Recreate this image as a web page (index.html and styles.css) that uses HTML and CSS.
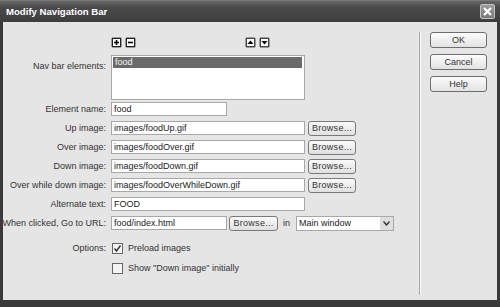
FILE: index.html
```html
<!DOCTYPE html>
<html>

<head>
  <title>Modify Navigation Bar</title>
  <link rel="stylesheet" href="styles.css">
</head>

<body>
  <div class="window">
    <div class="titlebar">
      <label>Modify Navigation Bar</label>
      <div class="close">
        <svg width="11" height="11" viewBox="0 0 11 11"><path d="M2 2 L9 9 M9 2 L2 9" stroke="#fff" stroke-width="2.2" /></svg>
      </div>
    </div>
    <div class="isi">
      <div class="form">
        <div class="tools">
          <span class="mini"><svg width="9" height="9" viewBox="0 0 9 9"><rect x="0.5" y="0.5" width="8" height="8" fill="#fff" stroke="#222" /><path d="M4.5 2 V7 M2 4.5 H7" stroke="#000" stroke-width="1.6" /></svg></span>
          <span class="mini"><svg width="9" height="9" viewBox="0 0 9 9"><rect x="0.5" y="0.5" width="8" height="8" fill="#fff" stroke="#222" /><path d="M2 4.5 H7" stroke="#000" stroke-width="1.6" /></svg></span>
          <span class="mini geser"><svg width="9" height="9" viewBox="0 0 9 9"><rect x="0.5" y="0.5" width="8" height="8" fill="#fff" stroke="#444" /><path d="M1.5 6 L4.5 2.5 L7.5 6 Z" fill="#000" /></svg></span>
          <span class="mini"><svg width="9" height="9" viewBox="0 0 9 9"><rect x="0.5" y="0.5" width="8" height="8" fill="#fff" stroke="#444" /><path d="M1.5 3 L4.5 6.5 L7.5 3 Z" fill="#000" /></svg></span>
        </div>
        <div class="row listrow">
          <span class="label">Nav bar elements:</span>
          <div class="list">
            <div class="pilih">food</div>
          </div>
        </div>
        <div class="row">
          <span class="label">Element name:</span>
          <input class="teks pendek" type="text" value="food" />
        </div>
        <div class="row">
          <span class="label">Up image:</span>
          <input class="teks" type="text" value="images/foodUp.gif" />
          <button class="browse">Browse...</button>
        </div>
        <div class="row">
          <span class="label">Over image:</span>
          <input class="teks" type="text" value="images/foodOver.gif" />
          <button class="browse">Browse...</button>
        </div>
        <div class="row">
          <span class="label">Down image:</span>
          <input class="teks" type="text" value="images/foodDown.gif" />
          <button class="browse">Browse...</button>
        </div>
        <div class="row">
          <span class="label">Over while down image:</span>
          <input class="teks" type="text" value="images/foodOverWhileDown.gif" />
          <button class="browse">Browse...</button>
        </div>
        <div class="row">
          <span class="label">Alternate text:</span>
          <input class="teks" type="text" value="FOOD" />
        </div>
        <div class="row">
          <span class="label">When clicked, Go to URL:</span>
          <input class="teks pendek" type="text" value="food/index.html" />
          <button class="browse kecil">Browse...</button>
          <span class="in">in</span>
          <div class="select">
            <span>Main window</span>
            <span class="panah"><svg width="7" height="5" viewBox="0 0 7 5"><path d="M0.5 0.5 L3.5 4 L6.5 0.5" fill="none" stroke="#333" stroke-width="1.4" /></svg></span>
          </div>
        </div>
        <div class="row opsi">
          <span class="label">Options:</span>
          <span class="cek"><svg width="9" height="9" viewBox="0 0 9 9"><path d="M1.5 4.5 L3.5 7 L7.5 1.5" fill="none" stroke="#333" stroke-width="1.4" /></svg></span>
          <span class="opsiteks">Preload images</span>
        </div>
        <div class="row opsi kedua">
          <span class="label"></span>
          <span class="cek"></span>
          <span class="opsiteks">Show "Down image" initially</span>
        </div>
      </div>
      <div class="garis"></div>
      <div class="samping">
        <button class="tombol">OK</button>
        <button class="tombol">Cancel</button>
        <button class="tombol">Help</button>
      </div>
    </div>
  </div>
</body>

</html>
```

FILE: styles.css
```css
* {
  margin: 0;
  padding: 0;
  box-sizing: border-box;
}

body {
  font-family: "Liberation Sans", Arial, sans-serif;
  font-size: 9px;
  color: #222;
  background-color: #3a3a3a;
}

.window {
  width: 500px;
  height: 307px;
  display: flex;
  flex-direction: column;
  background-color: #3a3a3a;
}

.titlebar {
  height: 22px;
  display: flex;
  align-items: center;
  justify-content: space-between;
  padding: 0 5px 0 6px;
  background: linear-gradient(#666, #4a4a4a 30%, #3e3e3e);
  border-top: 1px solid #777;
}

.titlebar label {
  color: white;
  font-weight: bold;
  font-size: 9.6px;
}

.close {
  width: 15px;
  height: 15px;
  display: flex;
  align-items: center;
  justify-content: center;
  background: linear-gradient(#9a9a9a, #7a7a7a);
  border: 1px solid #c4c4c4;
  border-radius: 2px;
}

.isi {
  flex: 1;
  display: flex;
  margin: 0 3px 7px 3px;
  background-color: #e5e5e5;
}

.form {
  width: 416px;
  padding-top: 15px;
}

.tools {
  display: flex;
  height: 11px;
  padding-left: 108px;
  gap: 3px;
}

.mini {
  width: 11px;
  height: 11px;
  display: flex;
  align-items: center;
  justify-content: center;
  border: 1px solid #9a9a9a;
  border-radius: 2px;
  background-color: #f2f2f2;
}

.geser {
  margin-left: 106px;
}

.row {
  display: flex;
  align-items: center;
  height: 14px;
  margin-top: 5px;
}

.label {
  width: 103px;
  flex-shrink: 0;
  margin-right: 5px;
  display: flex;
  justify-content: flex-end;
  white-space: nowrap;
  color: #333;
}

.listrow {
  height: 45px;
  margin-top: 7px;
  align-items: flex-start;
}

.listrow .label {
  padding-top: 6px;
}

.listrow + .row {
  margin-top: 2px;
}

.list {
  width: 194px;
  height: 45px;
  background-color: white;
  border: 1px solid #a8a8a8;
}

.pilih {
  height: 11px;
  line-height: 11px;
  margin: 1px 2px 0 1px;
  padding-left: 2px;
  background-color: #6a6a6a;
  color: #f4f4f4;
}

.teks {
  width: 194px;
  height: 14px;
  padding: 0 2px;
  font: inherit;
  color: #222;
  background-color: white;
  border: 1px solid #a8a8a8;
  outline: none;
}

.pendek {
  width: 116px;
}

.browse {
  width: 48px;
  height: 15px;
  margin-left: 3px;
  font: inherit;
  color: #333;
  letter-spacing: 0.3px;
  background: linear-gradient(#fafafa, #e0e0e0);
  border: 1px solid #7a7a7a;
  border-radius: 3px;
}

.kecil {
  width: 49px;
  margin-left: 2px;
}

.in {
  margin: 0 6px 0 5px;
  color: #333;
}

.select {
  width: 98px;
  height: 15px;
  display: flex;
  align-items: center;
  justify-content: space-between;
  padding-left: 2px;
  background-color: white;
  border: 1px solid #a8a8a8;
}

.panah {
  width: 13px;
  height: 13px;
  display: flex;
  align-items: center;
  justify-content: center;
  background-color: #dedede;
}

.opsi {
  margin-top: 12px;
  height: 12px;
}

.kedua {
  margin-top: 8px;
}

.cek {
  width: 11px;
  height: 11px;
  display: flex;
  align-items: center;
  justify-content: center;
  background-color: #f4f4f4;
  border: 1px solid #666;
  margin-left: 1px;
}

.opsiteks {
  margin-left: 5px;
  color: #333;
}

.garis {
  width: 2px;
  margin: 10px 0 5px 0;
  border-left: 1px solid #a8a8a8;
  border-right: 1px solid #fafafa;
}

.samping {
  display: flex;
  flex-direction: column;
  gap: 6px;
  padding: 10px 0 0 9px;
}

.tombol {
  width: 57px;
  height: 16px;
  font: inherit;
  color: #333;
  background: linear-gradient(#fcfcfc, #e2e2e2);
  border: 1px solid #6e6e6e;
  border-radius: 3px;
}
```
